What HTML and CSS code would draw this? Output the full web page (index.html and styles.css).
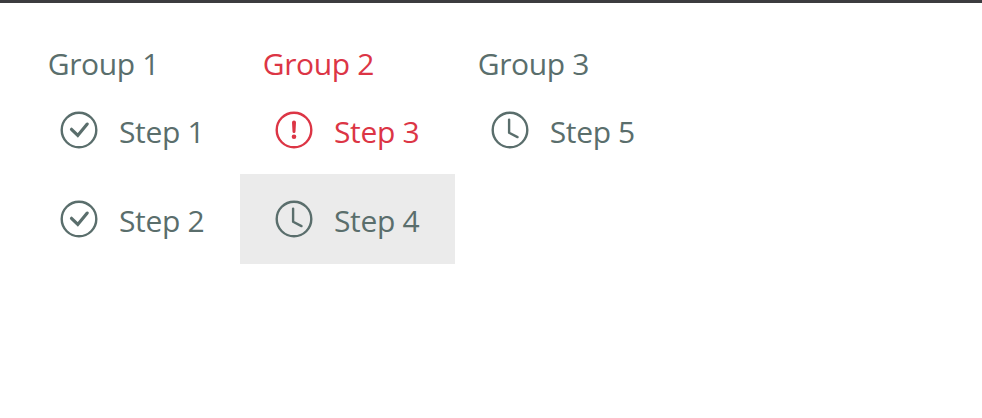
FILE: index.html
```
<!DOCTYPE html>
<html lang="en">
<head>
<meta charset="utf-8">
<title>Steps</title>
<link rel="stylesheet" href="styles.css">
</head>
<body>
<svg class="symbols" aria-hidden="true">
  <symbol id="check" viewBox="0 0 38 38"><circle cx="19" cy="19" r="17.3"/><path class="thick" d="M11.5 18.3l6.3 6.2 9.4-11.4"/></symbol>
  <symbol id="clock" viewBox="0 0 38 38"><circle cx="19" cy="19" r="17.3"/><path class="hands" d="M18.1 8.6v13.1l8.4 4.4"/></symbol>
  <symbol id="alert" viewBox="0 0 38 38"><circle cx="19" cy="19" r="17.3"/><path class="fill" d="M17 11.4a2 2 0 0 1 4 0l-.5 9.2a1.5 1.5 0 0 1-3 0z"/><circle class="fill" cx="19" cy="25.8" r="2.3"/></symbol>
</svg>
<main class="groups">
  <section class="group">
    <h2 class="title">Group 1</h2>
    <div class="step"><svg class="icon"><use href="#check"/></svg><span class="label">Step 1</span></div>
    <div class="step"><svg class="icon"><use href="#check"/></svg><span class="label">Step 2</span></div>
  </section>
  <section class="group">
    <h2 class="title error">Group 2</h2>
    <div class="step error"><svg class="icon"><use href="#alert"/></svg><span class="label">Step 3</span></div>
    <div class="step active"><svg class="icon"><use href="#clock"/></svg><span class="label">Step 4</span></div>
  </section>
  <section class="group">
    <h2 class="title">Group 3</h2>
    <div class="step last"><svg class="icon"><use href="#clock"/></svg><span class="label">Step 5</span></div>
  </section>
</main>
</body>
</html>
```
FILE: styles.css
```
* { box-sizing: border-box; }
body {
  margin: 0;
  min-height: 100vh;
  border-top: 3px solid #3c3c3f;
  background: #fff;
  color: #5a6e6c;
  font: 30px/40px "Open Sans", "Noto Sans", sans-serif;
  letter-spacing: -0.35px;
}
.symbols { display: none; }
.groups { display: flex; padding: 41px 0 0 25px; }
.group { width: 215px; }
.title { margin: 0; padding-left: 22.7px; height: 41px; font-size: 30px; font-weight: 400; }
.step { display: flex; align-items: center; height: 89px; padding: 1px 0 0 35px; gap: 21px; }
.step + .step { height: 90px; padding-top: 0; padding-bottom: 1px; }
.step.last { padding-left: 35.7px; }
.icon { width: 38px; height: 38px; flex: none; fill: none; stroke: currentColor; stroke-width: 2.4; }
.label { padding-top: 4px; }
.thick { stroke-width: 3.2; stroke-linecap: round; }
.hands { stroke-linecap: round; stroke-linejoin: round; }
.fill { fill: currentColor; stroke: none; }
.error { color: #dc3545; }
.active { background: #ebebeb; }
```
